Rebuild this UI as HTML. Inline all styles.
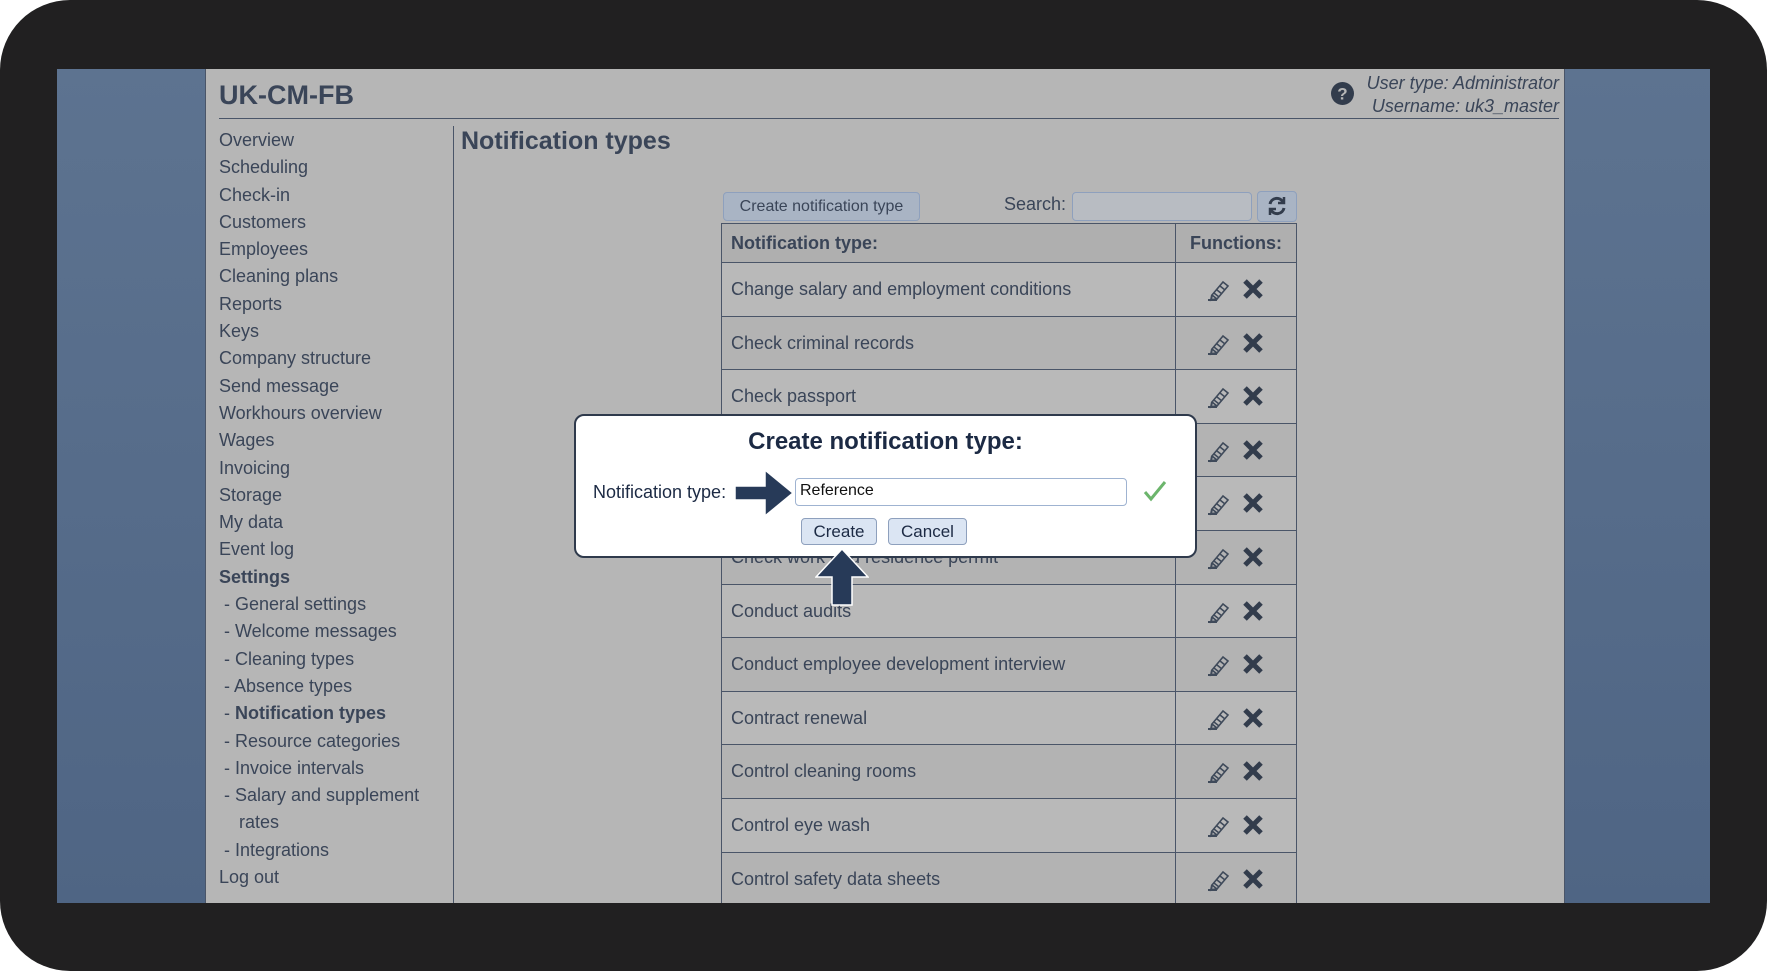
<!DOCTYPE html>
<html><head><meta charset="utf-8"><style>
*{margin:0;padding:0;box-sizing:border-box}
body{width:1767px;height:971px;background:#fff;position:relative;overflow:hidden;font-family:"Liberation Sans",sans-serif;color:#3a4558}
.frame{position:absolute;left:0;top:0;width:1767px;height:971px;background:#212021;border-radius:70px}
.blue{position:absolute;left:57px;top:69px;width:1653px;height:834px;background:linear-gradient(180deg,#5d7390,#4f6584)}
.panel{position:absolute;left:205px;top:69px;width:1360px;height:834px;background:#b6b6b6;border-left:1px solid #4a5568;border-right:1px solid #4a5568}
.a{position:absolute;white-space:nowrap}
.nav{left:219px;font-size:18px;line-height:27.3px}
.row{position:absolute;left:721px;width:576px;height:53.6px;border:1px solid #4a5568;border-top:none;background:#b8b8b8}
.row span{position:absolute;left:9px;top:0;line-height:53px;font-size:18px}
.row .sep{position:absolute;left:453px;top:0;bottom:0;border-left:1px solid #4a5568}
.btn{position:absolute;border:1px solid #8ea0bd;border-radius:4px;background:#dbe5f3;font-size:17px;color:#1c2a44;text-align:center}
#clip{position:absolute;left:0;top:0;width:1767px;height:903px;overflow:hidden}
</style></head><body>
<div class="frame"></div>
<div class="blue"></div>
<div class="panel"></div>
<div class="a" style="left:219px;top:80px;font-size:27px;font-weight:bold">UK-CM-FB</div>
<div style="position:absolute;left:219px;top:118px;width:1340px;border-top:1px solid #4a5568"></div>
<div class="a" style="right:208px;top:72px;font-size:18px;font-style:italic;text-align:right;line-height:23px">User type: Administrator<br>Username: uk3_master</div>
<svg class="a" style="left:1331px;top:82px" width="23" height="23" viewBox="0 0 23 23"><circle cx="11.5" cy="11.5" r="11.5" fill="#323c4c"/><text x="11.5" y="17.5" font-size="17" font-weight="bold" fill="#b6b6b6" text-anchor="middle" font-family="Liberation Sans">?</text></svg>
<div style="position:absolute;left:453px;top:126px;height:777px;border-left:1px solid #4a5568"></div>
<div class="a nav" style="top:127px">Overview<br>Scheduling<br>Check-in<br>Customers<br>Employees<br>Cleaning plans<br>Reports<br>Keys<br>Company structure<br>Send message<br>Workhours overview<br>Wages<br>Invoicing<br>Storage<br>My data<br>Event log<br><b>Settings</b><br>&nbsp;- General settings<br>&nbsp;- Welcome messages<br>&nbsp;- Cleaning types<br>&nbsp;- Absence types<br>&nbsp;- <b>Notification types</b><br>&nbsp;- Resource categories<br>&nbsp;- Invoice intervals<br>&nbsp;- Salary and supplement<br>&nbsp;&nbsp;&nbsp;&nbsp;rates<br>&nbsp;- Integrations<br>Log out</div>
<div class="a" style="left:461px;top:127px;font-size:25px;font-weight:bold">Notification types</div>
<div class="btn" style="left:723px;top:192px;width:197px;height:29px;line-height:27px;background:#a9b4c4;color:#3a4558;font-size:16px">Create notification type</div>
<div class="a" style="left:1004px;top:194px;font-size:18px">Search:</div>
<div style="position:absolute;left:1072px;top:192px;width:180px;height:29px;border:1px solid #8ea0bd;border-radius:4px;background:#b8bcc2"></div>
<div style="position:absolute;left:1257px;top:191px;width:40px;height:31px;border:1px solid #8ea0bd;border-radius:4px;background:#a9b4c4"></div>
<svg class="a" style="left:1266px;top:195px" width="22" height="22" viewBox="0 0 22 22" fill="none" stroke="#323c4c" stroke-width="3"><path d="M4 9a7 7 0 0 1 13-2"/><path d="M18 13a7 7 0 0 1-13 2"/><path d="M18 2v6h-6M4 20v-6h6" stroke-width="2.5"/></svg>
<div class="row" style="top:223px;height:40px;border-top:1px solid #4a5568;background:#afafaf"><span style="line-height:39px;font-weight:bold">Notification type:</span><div class="sep"></div><span style="left:468px;line-height:39px;font-weight:bold">Functions:</span></div>
<div id="clip"><div id="rows"></div></div>
<script>
var t=["Change salary and employment conditions","Check criminal records","Check passport","","","Check work and residence permit","Conduct audits","Conduct employee development interview","Contract renewal","Control cleaning rooms","Control eye wash","Control safety data sheets"];
var h="";for(var i=0;i<t.length;i++){var y=263+i*53.6;
h+='<div class="row" style="top:'+y+'px;background:'+(i%2?'#b3b3b3':'#b9b9b9')+'"><span>'+t[i]+'</span><div class="sep"></div>'+
'<svg style="position:absolute;left:484px;top:15px" width="26" height="24" viewBox="0 0 26 24" fill="none" stroke="#3f4a5a" stroke-width="1.6"><path d="M6 17L17 4l5 4-11 13z"/><path d="M8 15l5 4M11 12l5 4M14 8l5 4"/><path d="M6 17l-1 5 6-1M2 22h9" stroke-width="2"/></svg>'+
'<svg style="position:absolute;left:520px;top:16px" width="22" height="20" viewBox="0 0 22 20"><path d="M3 2L19 18M19 2L3 18" stroke="#323c4c" stroke-width="5"/></svg></div>';}
document.getElementById("rows").innerHTML=h;
</script>
<div style="position:absolute;left:574px;top:414px;width:623px;height:144px;background:#fff;border:2px solid #2f3a4c;border-radius:10px"></div>
<div class="a" style="left:574px;width:623px;text-align:center;top:428px;font-size:24px;font-weight:bold;color:#1c2a44">Create notification type:</div>
<div class="a" style="left:593px;top:482px;font-size:18px;color:#1c2a44">Notification type:</div>
<div style="position:absolute;left:795px;top:478px;width:332px;height:28px;border:1px solid #9fb3d1;border-radius:4px"></div>
<div class="a" style="left:800px;top:482px;font-size:16px;color:#111">Reference</div>
<svg class="a" style="left:1143px;top:480px" width="24" height="22" viewBox="0 0 24 22"><path d="M2 12l6 7L22 2" stroke="#6cb56c" stroke-width="3" fill="none"/></svg>
<div class="btn" style="left:801px;top:518px;width:76px;height:27px;line-height:25px">Create</div>
<div class="btn" style="left:888px;top:518px;width:79px;height:27px;line-height:25px">Cancel</div>
<svg class="a" style="left:734px;top:469px" width="60" height="48" viewBox="0 0 60 48"><path d="M1 17h30V1l28 23-28 23V31H1z" fill="#273a58" stroke="#fff" stroke-width="1.5"/></svg>
<svg class="a" style="left:815px;top:548px" width="54" height="58" viewBox="0 0 54 58"><path d="M17 57V29H1L27 1l26 28H37v28z" fill="#273a58" stroke="#fff" stroke-width="1.5"/></svg>
</body></html>
